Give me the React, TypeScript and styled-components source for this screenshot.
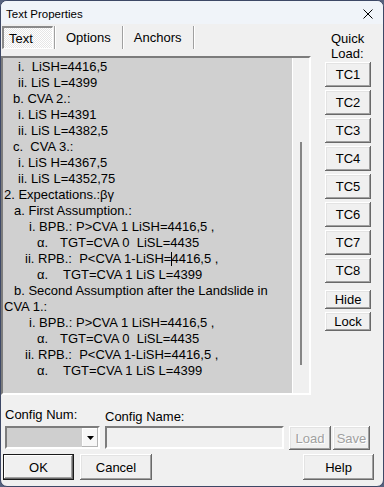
import React from "react";
import styled, { createGlobalStyle, css } from "styled-components";

const Global = createGlobalStyle`
  html, body { margin: 0; padding: 0; background: #56627e; }
  body { font-family: "Liberation Sans", Arial, sans-serif; }
  * { box-sizing: border-box; }
`;

const Window = styled.div`
  width: 384px;
  height: 487px;
  border: 1px solid #3d4866;
  border-radius: 7px;
  overflow: hidden;
  background: #f0f0f0;
  display: flex;
  flex-direction: column;
  font: 13px "Liberation Sans", Arial, sans-serif;
  color: #000;
`;

const TitleBar = styled.div`
  height: 23px;
  flex: none;
  background: #f0f4f9;
  display: flex;
  align-items: center;
  justify-content: space-between;
  padding: 0 10px 0 5px;
`;

const Title = styled.span`
  font-size: 11.5px;
  line-height: 14px;
  padding-top: 2px;
`;

const CloseIcon = styled.svg`
  display: block;
  margin-top: 2px;
`;

const Main = styled.div`
  display: flex;
  height: 371px;
  flex: none;
`;

const LeftPane = styled.div`
  width: 310px;
  display: flex;
  flex-direction: column;
`;

const TabBar = styled.div`
  height: 32px;
  display: flex;
  align-items: flex-start;
  padding-top: 2px;
`;

const Tab = styled.div<{ $active?: boolean }>`
  height: 23px;
  display: flex;
  align-items: center;
  padding: 0 11px 0 10px;
  ${(p) =>
    p.$active &&
    css`
      margin-left: 1px;
      width: 51px;
      padding: 0 0 0 5px;
      border-style: solid;
      border-width: 2px 1px 1px 2px;
      border-color: #8a8a8a #ffffff #ffffff #8a8a8a;
      background: repeating-conic-gradient(#ffffff 0 25%, #e6e6e6 0 50%) 0 0 / 2px 2px;
    `}
`;

const TabSep = styled.div<{ $first?: boolean }>`
  width: 2px;
  height: 23px;
  margin-left: ${(p) => (p.$first ? 1 : 0)}px;
  border-left: 1px solid #a0a0a0;
  border-right: 1px solid #ffffff;
`;

const TextBox = styled.div`
  height: 339px;
  display: flex;
  border-style: solid;
  border-width: 2px;
  border-color: #7c7c7c #ffffff #ffffff #7c7c7c;
`;

const TextContent = styled.div`
  flex: 1;
  background: #d0d0d0;
  padding: 1px 0 0 1px;
  overflow: hidden;
`;

const Line = styled.div<{ $indent: number }>`
  height: 16px;
  line-height: 16px;
  padding-left: ${(p) => p.$indent}px;
  white-space: pre;
`;

const Bullet = styled.span<{ $w: number }>`
  display: inline-block;
  width: ${(p) => p.$w}px;
`;

const Caret = styled.span`
  display: inline-block;
  width: 1px;
  height: 14px;
  background: #000;
  vertical-align: -3px;
  margin-right: -1px;
`;

const ScrollTrack = styled.div`
  width: 17px;
  border-left: 1px solid #ffffff;
  background: #f0f0f0;
  padding: 84px 0 0 7px;
`;

const Thumb = styled.div`
  width: 2px;
  height: 223px;
  background: #868686;
`;

const RightPane = styled.div`
  flex: 1;
  display: flex;
  flex-direction: column;
  padding: 7px 0 0 14px;
`;

const QuickLabel = styled.div`
  margin-left: 6px;
  line-height: 15px;
  margin-bottom: 1px;
`;

const Button = styled.button<{ $default?: boolean; $w?: number; $h?: number }>`
  width: ${(p) => p.$w ?? 46}px;
  height: ${(p) => p.$h ?? 25}px;
  padding: 0;
  border: none;
  background: #f0f0f0;
  font: 13px "Liberation Sans", Arial, sans-serif;
  color: #000;
  display: flex;
  align-items: center;
  justify-content: center;
  flex: none;
  box-shadow: inset -1px -1px #696969, inset 1px 1px #ffffff,
    inset -2px -2px #a0a0a0, inset 2px 2px #e3e3e3;
  ${(p) =>
    p.$default &&
    css`
      box-shadow: inset 0 0 0 1px #1a1a1a, inset -2px -2px #696969,
        inset 2px 2px #ffffff, inset -3px -3px #a0a0a0;
    `}
  &:disabled {
    color: #a0a0a0;
    text-shadow: 1px 1px 0 #ffffff;
  }
`;

const TCButton = styled(Button)`
  margin-bottom: 3px;
`;

const SmallButton = styled(Button)<{ $gapTop?: number }>`
  height: 19px;
  margin-top: ${(p) => p.$gapTop ?? 0}px;
  margin-bottom: 3px;
`;

const ConfigRow = styled.div`
  display: flex;
  align-items: flex-start;
  margin-top: 12px;
  padding-left: 4px;
  height: 43px;
  flex: none;
`;

const Field = styled.div<{ $gap?: number }>`
  display: flex;
  flex-direction: column;
  margin-left: ${(p) => p.$gap ?? 0}px;
`;

const FieldLabel = styled.div<{ $offset?: number }>`
  height: 19px;
  line-height: 16px;
  padding-top: ${(p) => p.$offset ?? 0}px;
`;

const sunken = css`
  border-style: solid;
  border-width: 2px;
  border-color: #7c7c7c #ffffff #ffffff #7c7c7c;
`;

const Combo = styled.div`
  width: 95px;
  height: 23px;
  display: flex;
  justify-content: flex-end;
  background: #cfcfcf;
  ${sunken}
`;

const DropButton = styled.div`
  width: 16px;
  background: #f7f7f7;
  display: flex;
  align-items: center;
  justify-content: center;
  box-shadow: inset -1px -1px #b4b4b4, inset 1px 1px #ffffff;
`;

const NameInput = styled.div`
  width: 179px;
  height: 23px;
  background: #f0f0f0;
  ${sunken}
`;

const ButtonPair = styled.div`
  display: flex;
  gap: 2px;
  margin: 19px 0 0 5px;
`;

const ButtonRow = styled.div`
  display: flex;
  margin-top: 4px;
  padding: 0 9px 0 2px;
  gap: 6px;
  flex: none;
`;

const Spacer = styled.div`
  flex: 1;
`;

type Ln = { i: number; t: string; a?: number; caretAfter?: string };

const lines: Ln[] = [
  { i: 14, t: "i.  LiSH=4416,5" },
  { i: 14, t: "ii. LiS L=4399" },
  { i: 9, t: "b. CVA 2.:" },
  { i: 14, t: "i. LiS H=4391" },
  { i: 14, t: "ii. LiS L=4382,5" },
  { i: 9, t: "c.  CVA 3.:" },
  { i: 14, t: "i. LiS H=4367,5" },
  { i: 14, t: "ii. LiS L=4352,75" },
  { i: 0, t: "2. Expectations.:βγ" },
  { i: 10, t: "a. First Assumption.:" },
  { i: 25, t: "i. BPB.: P>CVA 1 LiSH=4416,5 ," },
  { i: 33, a: 23, t: "TGT=CVA 0  LiSL=4435" },
  { i: 21, t: "ii. RPB.:  P<CVA 1-LiSH=", caretAfter: "4416,5 ," },
  { i: 33, a: 26, t: "TGT=CVA 1 LiS L=4399" },
  { i: 10, t: "b. Second Assumption after the Landslide in" },
  { i: 0, t: "CVA 1.:" },
  { i: 25, t: "i. BPB.: P>CVA 1 LiSH=4416,5 ," },
  { i: 33, a: 23, t: "TGT=CVA 0  LiSL=4435" },
  { i: 21, t: "ii. RPB.:  P<CVA 1-LiSH=4416,5 ," },
  { i: 33, a: 26, t: "TGT=CVA 1 LiS L=4399" },
];

export default function App() {
  return (
    <>
      <Global />
      <Window>
        <TitleBar>
          <Title>Text Properties</Title>
          <CloseIcon width="10" height="10" viewBox="0 0 10 10">
            <path d="M0.5 0.5 L9.5 9.5 M9.5 0.5 L0.5 9.5" stroke="#000" strokeWidth="1" fill="none" />
          </CloseIcon>
        </TitleBar>
        <Main>
          <LeftPane>
            <TabBar>
              <Tab $active>Text</Tab>
              <TabSep $first />
              <Tab>Options</Tab>
              <TabSep />
              <Tab>Anchors</Tab>
              <TabSep />
            </TabBar>
            <TextBox>
              <TextContent>
                {lines.map((l, k) => (
                  <Line key={k} $indent={l.i}>
                    {l.a ? <Bullet $w={l.a}>α.</Bullet> : null}
                    {l.t}
                    {l.caretAfter ? (
                      <>
                        <Caret />
                        {l.caretAfter}
                      </>
                    ) : null}
                  </Line>
                ))}
              </TextContent>
              <ScrollTrack>
                <Thumb />
              </ScrollTrack>
            </TextBox>
          </LeftPane>
          <RightPane>
            <QuickLabel>
              Quick
              <br />
              Load:
            </QuickLabel>
            {["TC1", "TC2", "TC3", "TC4", "TC5", "TC6", "TC7", "TC8"].map((t) => (
              <TCButton key={t}>{t}</TCButton>
            ))}
            <SmallButton $gapTop={4}>Hide</SmallButton>
            <SmallButton>Lock</SmallButton>
          </RightPane>
        </Main>
        <ConfigRow>
          <Field>
            <FieldLabel>Config Num:</FieldLabel>
            <Combo>
              <DropButton>
                <svg width="7" height="4" viewBox="0 0 7 4">
                  <polygon points="0,0 7,0 3.5,4" fill="#000" />
                </svg>
              </DropButton>
            </Combo>
          </Field>
          <Field $gap={5}>
            <FieldLabel $offset={2}>Config Name:</FieldLabel>
            <NameInput />
          </Field>
          <ButtonPair>
            <Button $w={42} $h={24} disabled>
              Load
            </Button>
            <Button $w={37} $h={24} disabled>
              Save
            </Button>
          </ButtonPair>
        </ConfigRow>
        <ButtonRow>
          <Button $default $w={71} $h={26}>
            OK
          </Button>
          <Button $w={72} $h={26}>
            Cancel
          </Button>
          <Spacer />
          <Button $w={71} $h={26}>
            Help
          </Button>
        </ButtonRow>
      </Window>
    </>
  );
}
